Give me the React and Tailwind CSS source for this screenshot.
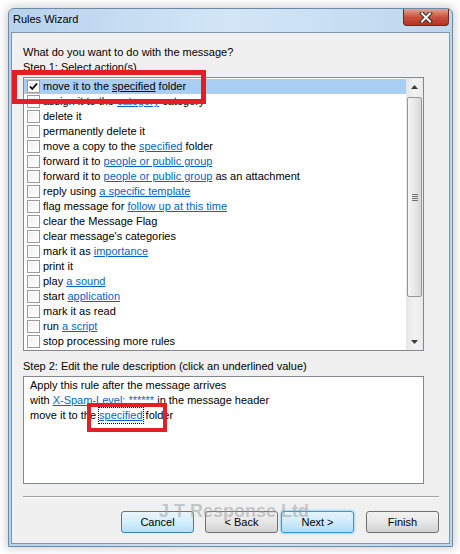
import React from "react"

const actions = [
  [{ t: "move it to the " }, { t: "specified", link: true }, { t: " folder" }],
  [{ t: "assign it to the " }, { t: "category", link: true }, { t: " category" }],
  [{ t: "delete it" }],
  [{ t: "permanently delete it" }],
  [{ t: "move a copy to the " }, { t: "specified", link: true }, { t: " folder" }],
  [{ t: "forward it to " }, { t: "people or public group", link: true }],
  [{ t: "forward it to " }, { t: "people or public group", link: true }, { t: " as an attachment" }],
  [{ t: "reply using " }, { t: "a specific template", link: true }],
  [{ t: "flag message for " }, { t: "follow up at this time", link: true }],
  [{ t: "clear the Message Flag" }],
  [{ t: "clear message's categories" }],
  [{ t: "mark it as " }, { t: "importance", link: true }],
  [{ t: "print it" }],
  [{ t: "play " }, { t: "a sound", link: true }],
  [{ t: "start " }, { t: "application", link: true }],
  [{ t: "mark it as read" }],
  [{ t: "run " }, { t: "a script", link: true }],
  [{ t: "stop processing more rules" }],
]

const CheckBox = ({ checked }) => (
  <div className="w-[13px] h-[13px] shrink-0 border border-[#9a9a9a] bg-white p-px">
    <div className="w-full h-full bg-gradient-to-br from-[#f0f0f0] to-white flex items-center justify-center">
      {checked && (
        <svg width="9" height="9" viewBox="0 0 9 9">
          <path d="M1 4.5 L3.3 7 L8 1.5" stroke="#000" strokeWidth="1.8" fill="none" />
        </svg>
      )}
    </div>
  </div>
)

const Button = ({ children, variant }) => {
  let cls = "border-[#707070] bg-gradient-to-b from-[#f2f2f2] via-[#e6e6e6] to-[#d2d2d2]"
  if (variant === "hover") cls = "border-[#3c7fb1] bg-gradient-to-b from-[#eaf6fd] via-[#d4eefc] to-[#b6e0f8]"
  if (variant === "default") cls = "border-[#3399dd] bg-gradient-to-b from-[#e5f4fc] via-[#cfebfb] to-[#b2dcf5] shadow-[0_0_2px_1px_#9fd6f5]"
  return (
    <div className={`w-[73px] h-[22px] rounded-[3px] border flex items-center justify-center text-[11px] text-black ${cls}`}>
      {children}
    </div>
  )
}

export default function App() {
  return (
    <div
      className="relative w-[460px] h-[554px] bg-white pt-[8px] pl-[8px] overflow-hidden"
      style={{ fontFamily: '"Liberation Sans", Arial, sans-serif' }}
    >
      {/* Window */}
      <div className="w-[445px] h-[539px] border border-[#6f8aa5] rounded-t-[6px] bg-gradient-to-r from-[#b7d2ec] via-[#d3e6f7] to-[#bcd6ee] shadow-[0_0_8px_2px_rgba(0,0,0,0.18)] px-[2px] pb-[2px] flex flex-col">
        {/* Title bar */}
        <div className="h-[23px] flex justify-between items-start">
          <div className="pl-[2px] pt-[3px] text-[11px] leading-[15px] text-black">Rules Wizard</div>
          <div className="w-[46px] h-[17px] mr-px rounded-b-[4px] border border-t-0 border-[#6b2a22] bg-gradient-to-b from-[#e3a395] via-[#c8533f] to-[#b5321f] flex items-center justify-center">
            <svg width="14" height="11" viewBox="0 0 14 11">
              <path d="M3 1.5 L11 9.5 M11 1.5 L3 9.5" stroke="#3a2a2a" strokeWidth="4" strokeLinecap="square" />
              <path d="M3 1.5 L11 9.5 M11 1.5 L3 9.5" stroke="#fff" strokeWidth="2" strokeLinecap="square" />
            </svg>
          </div>
        </div>

        {/* Client area */}
        <div className="flex-1 border border-[#7f93a9] bg-[#f0f0f0] pl-[11px] pr-[10px] pt-[12px] flex flex-col text-[11px] text-black">
          <div className="leading-[15px] h-[15px]">What do you want to do with the message?</div>
          <div className="leading-[15px] h-[15px]">Step 1: Select action(s)</div>

          {/* Actions list */}
          <div className="mt-[2px] w-[401px] h-[274px] border border-[#828790] bg-white flex">
            <div className="flex-1 pt-px">
              {actions.map((parts, i) => (
                <div
                  key={i}
                  className={`h-[15px] flex items-center pl-[3px] ${i === 0 ? "bg-[#aacdf2]" : ""}`}
                >
                  <CheckBox checked={i === 0} />
                  <span className="ml-[3px] leading-[15px] whitespace-nowrap">
                    {parts.map((p, j) =>
                      p.link ? (
                        <span key={j} className={`underline ${i === 0 ? "text-black" : "text-[#0066cc]"}`}>
                          {p.t}
                        </span>
                      ) : (
                        <span key={j}>{p.t}</span>
                      )
                    )}
                  </span>
                </div>
              ))}
            </div>

            {/* Scrollbar */}
            <div className="w-[17px] bg-gradient-to-r from-[#e6e6e6] via-[#f2f2f2] to-[#ebebeb] flex flex-col">
              <div className="h-[17px] flex items-center justify-center">
                <svg width="7" height="4" viewBox="0 0 7 4">
                  <path d="M0 4 L3.5 0 L7 4 Z" fill="#3c3c3c" />
                </svg>
              </div>
              <div className="mt-[2px] mx-px h-[200px] rounded-[2px] border border-[#979797] bg-gradient-to-r from-[#f4f4f4] via-[#e9e9e9] to-[#d6d6d6] flex flex-col items-center justify-center gap-px">
                <div className="w-[6px] h-px bg-[#707070]" />
                <div className="w-[6px] h-px bg-[#707070]" />
                <div className="w-[6px] h-px bg-[#707070]" />
                <div className="w-[6px] h-px bg-[#707070]" />
              </div>
              <div className="flex-1" />
              <div className="h-[17px] flex items-center justify-center">
                <svg width="7" height="4" viewBox="0 0 7 4">
                  <path d="M0 0 L7 0 L3.5 4 Z" fill="#3c3c3c" />
                </svg>
              </div>
            </div>
          </div>

          <div className="mt-[8px] leading-[15px] h-[15px]">
            Step 2: Edit the rule description (click an underlined value)
          </div>

          {/* Description box */}
          <div className="mt-[2px] w-[401px] h-[108px] border border-[#828790] bg-white pl-[6px] pt-px">
            <div className="leading-[15px] h-[15px]">Apply this rule after the message arrives</div>
            <div className="leading-[15px] h-[15px]">
              with <span className="underline text-[#0066cc]">X-Spam-Level: ******</span> in the message header
            </div>
            <div className="leading-[15px] h-[15px] flex">
              <span className="whitespace-pre">move it to the </span>
              <span className="border border-dotted border-black -my-px -mx-px underline text-[#0066cc] leading-[15px]">specified</span>
              <span className="whitespace-pre"> folder</span>
            </div>
          </div>

          {/* Separator */}
          <div className="mt-[12px] h-px bg-[#a0a0a0]" />
          <div className="h-px bg-white" />

          {/* Buttons */}
          <div className="mt-[13px] flex justify-end">
            <Button variant="hover">Cancel</Button>
            <div className="w-[11px]" />
            <Button>&lt; Back</Button>
            <div className="w-[3px]" />
            <Button variant="default">Next &gt;</Button>
            <div className="w-[12px]" />
            <Button>Finish</Button>
          </div>
        </div>
      </div>

      {/* Annotation boxes */}
      <div className="absolute left-[12px] top-[70px] w-[194px] h-[34px] border-[5px] border-[#e31e24]" />
      <div className="absolute left-[87px] top-[403px] w-[80px] h-[29px] border-[4px] border-[#e31e24]" />

      {/* Watermark */}
      <div className="absolute left-[159px] top-[500px] text-[18px] font-bold leading-[22px] text-[#9a9a9a]/50 whitespace-nowrap">
        J T Response Ltd
      </div>
    </div>
  )
}
